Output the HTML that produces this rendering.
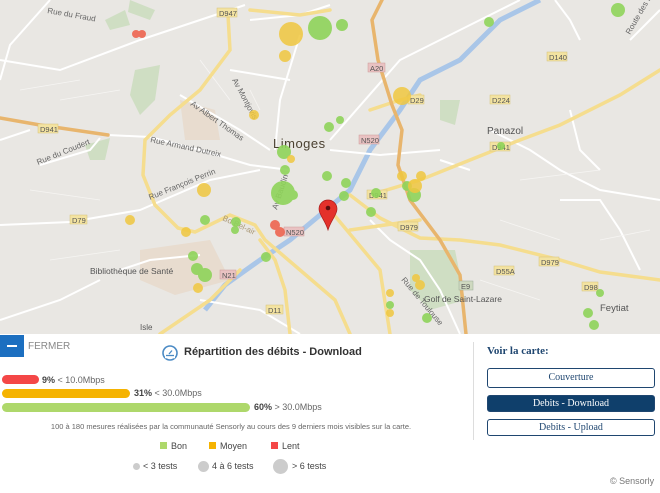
<!DOCTYPE html>
<html><head><meta charset="utf-8"><style>
*{margin:0;padding:0;box-sizing:border-box}
body{width:660px;height:493px;overflow:hidden;background:#fff;font-family:"Liberation Sans",sans-serif;position:relative}
.map{position:absolute;left:0;top:0;width:660px;height:334px;background:#e9e7e3;overflow:hidden}
.abs{position:absolute}
.bar{position:absolute;left:2px;height:9px;border-radius:5px}
.lbl{position:absolute;font-size:9px;color:#666;white-space:nowrap}
.lbl b{color:#444}
.btn{position:absolute;left:487px;width:168px;border:1px solid #1f4670;border-radius:3px;font-family:"Liberation Serif",serif;font-size:10px;color:#1f4670;text-align:center}
</style></head><body>
<div class="map">
<svg width="660" height="334" viewBox="0 0 660 334" xmlns="http://www.w3.org/2000/svg" font-family="Liberation Sans, sans-serif">
<!-- parks -->
<g fill="#cfdec3">
<path d="M135 70 L160 65 L155 100 L140 115 L130 95Z"/>
<path d="M85 145 L110 138 L105 160 L90 160Z"/>
<path d="M440 100 L460 100 L455 125 L440 120Z"/>
<path d="M105 20 L125 10 L130 25 L110 30Z"/>
<path d="M410 250 L455 250 L465 300 L430 310 L410 290Z"/>
<path d="M130 0 L155 10 L150 20 L128 12Z"/>
</g>
<g fill="#e8dccf"><path d="M140 250 L210 240 L230 280 L175 295 L140 280Z"/><path d="M180 100 L215 110 L220 140 L185 140Z"/></g>
<!-- river -->
<path d="M540 0 L500 20 L460 60 L420 80 L400 110 L370 150 L350 190 L320 215 L290 240 L260 260 L225 285 L205 310" fill="none" stroke="#a9c6e8" stroke-width="5"/>
<!-- white streets -->
<g fill="none" stroke="#fff" stroke-width="2">
<path d="M0 60 L60 70 L140 40 L200 20 L245 5"/><path d="M50 0 L10 45 L0 80"/>
<path d="M108 135 L150 137 L200 150 L250 165 L290 170"/>
<path d="M0 225 L70 222 L140 210 L210 180 L260 170"/>
<path d="M40 165 L90 150 L100 138"/><path d="M180 95 L240 130 L270 150"/>
<path d="M230 70 L260 75 L290 80"/><path d="M300 35 L280 100 L275 150"/>
<path d="M330 150 L380 155 L440 150"/><path d="M330 140 L400 60 L480 20 L520 0"/>
<path d="M370 220 L390 240 L420 260 L440 290 L460 334"/>
<path d="M490 130 L530 150 L560 170 L600 190 L660 200"/>
<path d="M570 110 L580 150 L600 170"/><path d="M440 160 L470 170"/>
<path d="M120 270 L150 260 L200 255"/><path d="M250 20 L300 15 L330 5"/>
<path d="M200 300 L260 310 L300 334"/><path d="M555 0 L570 20 L580 40"/>
<path d="M0 320 L60 300 L100 280"/><path d="M630 40 L650 20 L660 10"/>
<path d="M30 130 L0 140"/><path d="M560 200 L600 200 L620 230 L640 270"/>
</g>
<g fill="none" stroke="#f7f6f4" stroke-width="0.8" opacity="0.9">
<path d="M20 90 L80 80 M60 100 L120 90 M30 190 L100 200 M50 260 L120 250 M500 220 L560 240 M520 180 L600 170 M480 280 L540 300 M600 240 L650 230 M250 90 L260 110 M200 60 L230 100"/>
</g>
<!-- yellow roads -->
<g fill="none" stroke="#f5dd8e" stroke-width="3.5" stroke-linecap="round">
<path d="M228 15 L230 50 L200 90 L170 115 L145 140 L143 175 L155 205 L178 228 L195 232 L230 215 L255 225 L265 240 L300 270 L335 300 L350 334"/>
<path d="M250 10 L300 15 L330 10"/>
<path d="M370 195 L420 180 L470 160 L520 140 L560 125 L620 95 L660 70"/>
<path d="M350 195 L380 218 L420 238 L460 240 L500 245 L560 260 L600 272 L660 280"/>
<path d="M370 110 L400 100 L420 95"/>
<path d="M260 240 L275 260 L285 290 L290 334"/>
<path d="M330 210 L355 240 L380 270 L390 334"/>
<path d="M160 334 L210 300 L240 270"/>
<path d="M350 230 L420 220"/>
</g>
<!-- orange roads -->
<g fill="none" stroke="#e8b56d" stroke-width="3.5" stroke-linecap="round">
<path d="M0 118 L40 125 L108 135"/>
<path d="M382 0 L372 20 L378 60 L392 105 L402 130 L398 165 L410 200 L440 240 L460 275 L466 334"/>
</g>
<!-- road shields -->
<g font-size="7.5" fill="#555">
<rect x="217" y="8" width="20" height="9" fill="#f3e3a1" stroke="#d6c27a" stroke-width=".5"/><text x="219" y="16">D947</text>
<rect x="38" y="124" width="20" height="9" fill="#f3e3a1" stroke="#d6c27a" stroke-width=".5"/><text x="40" y="132">D941</text>
<rect x="70" y="215" width="17" height="9" fill="#f3e3a1" stroke="#d6c27a" stroke-width=".5"/><text x="72" y="223">D79</text>
<rect x="266" y="305" width="17" height="9" fill="#f3e3a1" stroke="#d6c27a" stroke-width=".5"/><text x="268" y="313">D11</text>
<rect x="547" y="52" width="20" height="9" fill="#f3e3a1" stroke="#d6c27a" stroke-width=".5"/><text x="549" y="60">D140</text>
<rect x="408" y="95" width="16" height="9" fill="#f3e3a1" stroke="#d6c27a" stroke-width=".5"/><text x="410" y="103">D29</text>
<rect x="490" y="95" width="20" height="9" fill="#f3e3a1" stroke="#d6c27a" stroke-width=".5"/><text x="492" y="103">D224</text>
<rect x="490" y="142" width="20" height="9" fill="#f3e3a1" stroke="#d6c27a" stroke-width=".5"/><text x="492" y="150">D941</text>
<rect x="367" y="190" width="20" height="9" fill="#f3e3a1" stroke="#d6c27a" stroke-width=".5"/><text x="369" y="198">D941</text>
<rect x="398" y="222" width="20" height="9" fill="#f3e3a1" stroke="#d6c27a" stroke-width=".5"/><text x="400" y="230">D979</text>
<rect x="539" y="257" width="20" height="9" fill="#f3e3a1" stroke="#d6c27a" stroke-width=".5"/><text x="541" y="265">D979</text>
<rect x="494" y="266" width="20" height="9" fill="#f3e3a1" stroke="#d6c27a" stroke-width=".5"/><text x="496" y="274">D55A</text>
<rect x="582" y="282" width="16" height="9" fill="#f3e3a1" stroke="#d6c27a" stroke-width=".5"/><text x="584" y="290">D98</text>
<rect x="368" y="63" width="17" height="9" fill="#e9c2c2" stroke="#c99" stroke-width=".5"/><text x="370" y="71">A20</text>
<rect x="359" y="135" width="20" height="9" fill="#e9c2c2" stroke="#c99" stroke-width=".5"/><text x="361" y="143">N520</text>
<rect x="284" y="227" width="20" height="9" fill="#e9c2c2" stroke="#c99" stroke-width=".5"/><text x="286" y="235">N520</text>
<rect x="220" y="270" width="16" height="9" fill="#e9c2c2" stroke="#c99" stroke-width=".5"/><text x="222" y="278">N21</text>
<rect x="459" y="281" width="14" height="9" fill="#cfd9c0" stroke="#9a9" stroke-width=".5"/><text x="461" y="289">E9</text>
</g>
<!-- labels -->
<g fill="#666" font-size="8">
<text x="47" y="13" transform="rotate(10 47 13)">Rue du Fraud</text>
<text x="38" y="165" transform="rotate(-22 38 165)">Rue du Coudert</text>
<text x="150" y="142" transform="rotate(12 150 142)">Rue Armand Dutreix</text>
<text x="150" y="200" transform="rotate(-22 150 200)">Rue François Perrin</text>
<text x="190" y="105" transform="rotate(35 190 105)">Av Albert Thomas</text>
<text x="232" y="80" transform="rotate(62 232 80)">Av Montjovis</text>
<text x="277" y="210" transform="rotate(-72 277 210)">Av Baudin</text>
<text x="222" y="220" transform="rotate(25 222 220)" fill="#a97">Bd Bel-air</text>
<text x="90" y="274" font-size="8.5" fill="#555">Bibliothèque de Santé</text>
<text x="140" y="330" fill="#555">Isle</text>
<text x="401" y="280" transform="rotate(50 401 280)">Rue de Toulouse</text>
<text x="424" y="302" font-size="8.5" fill="#555">Golf de Saint-Lazare</text>
<text x="487" y="134" font-size="10" fill="#555">Panazol</text>
<text x="600" y="311" font-size="9.5" fill="#555">Feytiat</text>
<text x="630" y="35" transform="rotate(-60 630 35)">Route des Lie</text>
<text x="273" y="148" font-size="13" fill="#4a4030" letter-spacing=".5">Limoges</text>
</g>
<!-- dots -->
<g fill="#8fd45a" opacity="0.9">
<circle cx="320" cy="28" r="12"/><circle cx="342" cy="25" r="6"/><circle cx="489" cy="22" r="5"/><circle cx="618" cy="10" r="7"/>
<circle cx="329" cy="127" r="5"/><circle cx="284" cy="152" r="7"/><circle cx="285" cy="170" r="5"/><circle cx="327" cy="176" r="5"/><circle cx="346" cy="183" r="5"/>
<circle cx="283" cy="193" r="12"/><circle cx="293" cy="195" r="5"/><circle cx="205" cy="220" r="5"/><circle cx="236" cy="222" r="5"/><circle cx="235" cy="230" r="4"/>
<circle cx="197" cy="269" r="6"/><circle cx="205" cy="275" r="7"/><circle cx="193" cy="256" r="5"/><circle cx="266" cy="257" r="5"/>
<circle cx="344" cy="196" r="5"/><circle cx="376" cy="193" r="5"/><circle cx="371" cy="212" r="5"/><circle cx="407" cy="186" r="5"/><circle cx="414" cy="195" r="7"/>
<circle cx="390" cy="305" r="4"/><circle cx="427" cy="318" r="5"/><circle cx="600" cy="293" r="4"/><circle cx="588" cy="313" r="5"/><circle cx="594" cy="325" r="5"/><circle cx="501" cy="146" r="4"/><circle cx="340" cy="120" r="4"/>
</g>
<g fill="#f0c73f" opacity="0.85">
<circle cx="291" cy="34" r="12"/><circle cx="285" cy="56" r="6"/><circle cx="254" cy="115" r="5"/><circle cx="291" cy="159" r="4"/><circle cx="204" cy="190" r="7"/>
<circle cx="130" cy="220" r="5"/><circle cx="186" cy="232" r="5"/><circle cx="198" cy="288" r="5"/><circle cx="402" cy="96" r="9"/>
<circle cx="402" cy="176" r="5"/><circle cx="421" cy="176" r="5"/><circle cx="415" cy="186" r="7"/><circle cx="390" cy="293" r="4"/><circle cx="420" cy="285" r="5"/><circle cx="416" cy="278" r="4"/><circle cx="390" cy="313" r="4"/>
</g>
<g fill="#ee6550" opacity="0.9">
<circle cx="136" cy="34" r="4"/><circle cx="142" cy="34" r="4"/><circle cx="275" cy="225" r="5"/><circle cx="280" cy="232" r="5"/>
</g>
<!-- pin -->
<path d="M328 230 C325 220 319 215 319 209 A9 9 0 0 1 337 209 C337 215 331 220 328 230Z" fill="#e4312b" stroke="#a91c1c" stroke-width=".7"/>
<circle cx="328" cy="208" r="2.3" fill="#5a0e0e"/>
</svg>
</div>
<!-- panel -->
<div class="abs" style="left:0;top:335px;width:24px;height:22px;background:#1c6fc0"><div style="position:absolute;left:7px;top:10px;width:10px;height:2px;background:#fff"></div></div>
<div class="abs" style="left:28px;top:341px;font-size:10px;color:#888">FERMER</div>
<svg class="abs" style="left:161px;top:345px" width="18" height="16" viewBox="0 0 18 16"><circle cx="9" cy="8" r="7" fill="none" stroke="#4a8ac4" stroke-width="1.6"/><path d="M4 12 L14 12" stroke="#fff" stroke-width="2.5"/><path d="M5 10.5 L13 10.5" stroke="#4a8ac4" stroke-width="1.3"/><path d="M8 9 L11 5.5" stroke="#4a8ac4" stroke-width="1.3"/></svg>
<div class="abs" style="left:184px;top:346px;font-size:11px;font-weight:bold;color:#333">Répartition des débits - Download</div>
<div class="bar" style="top:375px;width:37px;background:#f44747"></div>
<div class="lbl" style="left:42px;top:375px"><b>9%</b> &lt; 10.0Mbps</div>
<div class="bar" style="top:389px;width:128px;background:#f5b301"></div>
<div class="lbl" style="left:134px;top:388px"><b>31%</b> &lt; 30.0Mbps</div>
<div class="bar" style="top:403px;width:248px;background:#aed86b"></div>
<div class="lbl" style="left:254px;top:402px"><b>60%</b> &gt; 30.0Mbps</div>
<div class="abs" style="left:0;width:462px;top:422px;font-size:7.5px;color:#666;text-align:center">100 à 180 mesures réalisées par la communauté Sensorly au cours des 9 derniers mois visibles sur la carte.</div>
<div class="abs" style="left:160px;top:442px;width:7px;height:7px;background:#aed86b"></div><div class="lbl" style="left:171px;top:441px;color:#444">Bon</div>
<div class="abs" style="left:209px;top:442px;width:7px;height:7px;background:#f5b301"></div><div class="lbl" style="left:220px;top:441px;color:#444">Moyen</div>
<div class="abs" style="left:271px;top:442px;width:7px;height:7px;background:#f44747"></div><div class="lbl" style="left:282px;top:441px;color:#444">Lent</div>
<div class="abs" style="left:133px;top:463px;width:7px;height:7px;border-radius:50%;background:#ccc"></div><div class="lbl" style="left:143px;top:461px;color:#444">&lt; 3 tests</div>
<div class="abs" style="left:198px;top:461px;width:11px;height:11px;border-radius:50%;background:#ccc"></div><div class="lbl" style="left:212px;top:461px;color:#444">4 à 6 tests</div>
<div class="abs" style="left:273px;top:459px;width:15px;height:15px;border-radius:50%;background:#ccc"></div><div class="lbl" style="left:292px;top:461px;color:#444">&gt; 6 tests</div>
<div class="abs" style="left:473px;top:342px;width:1px;height:98px;background:#ddd"></div>
<div class="abs" style="left:487px;top:345px;font-family:'Liberation Serif',serif;font-weight:bold;font-size:11px;color:#1f4670">Voir la carte:</div>
<div class="btn" style="top:368px;height:20px;line-height:18px">Couverture</div>
<div class="btn" style="top:395px;height:17px;line-height:15px;background:#0f3f6b;color:#fff">Debits - Download</div>
<div class="btn" style="top:419px;height:17px;line-height:15px">Debits - Upload</div>
<div class="abs" style="left:610px;top:476px;font-size:9px;color:#777">© Sensorly</div>
</body></html>
